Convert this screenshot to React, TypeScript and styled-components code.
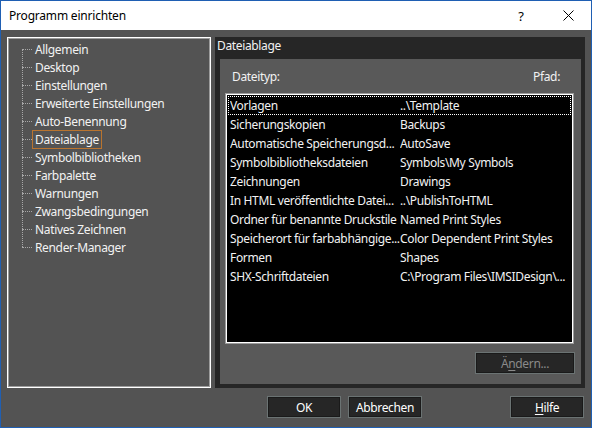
import styled, { createGlobalStyle } from 'styled-components';

const GlobalStyle = createGlobalStyle`
    html, body {
        margin: 0;
        padding: 0;
        background: #535353;
    }
    * {
        box-sizing: border-box;
    }
`;

const Window = styled.div`
    width: 592px;
    height: 428px;
    border: 1px solid #1f5fb3;
    background: #535353;
    display: flex;
    flex-direction: column;
    font-family: 'Noto Sans', 'Open Sans', sans-serif;
    font-size: 12px;
    letter-spacing: -0.35px;
    color: #f2f2f2;
`;

const TitleBar = styled.div`
    height: 29px;
    background: #ffffff;
    color: #000000;
    display: flex;
    align-items: center;
    padding-left: 8px;
    letter-spacing: -0.2px;
    .title {
        flex: 1;
    }
    .help {
        width: 20px;
        text-align: center;
        font-size: 13px;
        margin-right: 14px;
    }
    .close {
        width: 46px;
        height: 29px;
        display: flex;
        align-items: center;
        justify-content: center;
    }
`;

const Body = styled.div`
    flex: 1;
    padding: 7px 6px 0 6px;
    display: flex;
    flex-direction: column;
`;

const Panels = styled.div`
    display: flex;
    gap: 4px;
    height: 351px;
`;

const TreePanel = styled.div`
    flex: 0 0 204px;
    border: 1px solid #ffffff;
    box-shadow: 0 0 0 1px #9c9c9c inset;
    padding: 2px 0 0 1px;
`;

const Tree = styled.ul`
    position: relative;
    list-style: none;
    margin: 0;
    padding: 0 0 0 13px;
    &::before {
        content: '';
        position: absolute;
        left: 13px;
        top: 9px;
        bottom: 9px;
        border-left: 1px dotted #a8a8a8;
    }
`;

const TreeItem = styled.li<{ $selected?: boolean }>`
    height: 18px;
    display: flex;
    align-items: center;
    .stub {
        width: 10px;
        border-top: 1px dotted #a8a8a8;
    }
    .label {
        line-height: 17px;
        padding: 0 2px;
        border: 1px solid ${(p) => (p.$selected ? '#b9742f' : 'transparent')};
        white-space: nowrap;
    }
`;

const Frame = styled.div`
    flex: 1;
    min-width: 0;
    background: #262626;
    display: flex;
    flex-direction: column;
`;

const FrameTitle = styled.div`
    height: 22px;
    line-height: 17px;
    padding-left: 2px;
`;

const Group = styled.div`
    flex: 1;
    margin: 0 4px 4px 5px;
    background: #595959;
    display: flex;
    flex-direction: column;
    padding: 0 8px 0 6px;
`;

const ColumnHeads = styled.div`
    height: 35px;
    display: flex;
    justify-content: space-between;
    align-items: center;
    padding: 0 13px 0 6px;
`;

const List = styled.div`
    height: 249px;
    background: #000000;
    border: 1px solid #ffffff;
    box-shadow: 0 0 0 1px #9c9c9c;
    padding: 1px;
`;

const Row = styled.div<{ $focused?: boolean }>`
    height: 19px;
    display: grid;
    grid-template-columns: 170px 1fr;
    align-items: center;
    padding-left: 2px;
    white-space: nowrap;
    outline: ${(p) => (p.$focused ? '1px dotted #ffffff' : 'none')};
    outline-offset: -1px;
    span {
        overflow: hidden;
    }
`;

const Actions = styled.div`
    display: flex;
    justify-content: flex-end;
    padding: 9px 0 0 0;
    margin-right: -2px;
`;

const Button = styled.button<{ $disabled?: boolean; $push?: number }>`
    width: ${(p) => (p.$disabled ? 100 : 74)}px;
    height: 22px;
    margin-left: ${(p) => p.$push ?? 0}px;
    background: #262626;
    border: 1px solid #6b7373;
    box-shadow: inset 0 0 0 1px #1a1a1a;
    color: ${(p) => (p.$disabled ? '#8a8a8a' : '#ffffff')};
    font-family: inherit;
    font-size: 12px;
    letter-spacing: inherit;
    padding: 0;
    u {
        text-decoration-thickness: 1px;
        text-underline-offset: 2px;
    }
`;

const Footer = styled.div`
    display: flex;
    justify-content: flex-end;
    margin: 8px 1px 0 0;
    gap: 7px;
`;

const treeItems = [
    'Allgemein',
    'Desktop',
    'Einstellungen',
    'Erweiterte Einstellungen',
    'Auto-Benennung',
    'Dateiablage',
    'Symbolbibliotheken',
    'Farbpalette',
    'Warnungen',
    'Zwangsbedingungen',
    'Natives Zeichnen',
    'Render-Manager',
];

const rows = [
    ['Vorlagen', '..\\Template'],
    ['Sicherungskopien', 'Backups'],
    ['Automatische Speicherungsd...', 'AutoSave'],
    ['Symbolbibliotheksdateien', 'Symbols\\My Symbols'],
    ['Zeichnungen', 'Drawings'],
    ['In HTML veröffentlichte Datei...', '..\\PublishToHTML'],
    ['Ordner für benannte Druckstile', 'Named Print Styles'],
    ['Speicherort für farbabhängige...', 'Color Dependent Print Styles'],
    ['Formen', 'Shapes'],
    ['SHX-Schriftdateien', 'C:\\Program Files\\IMSIDesign\\...'],
];

function App() {
    return (
        <>
            <GlobalStyle />
            <Window>
                <TitleBar>
                    <span className="title">Programm einrichten</span>
                    <span className="help">?</span>
                    <span className="close">
                        <svg width="11" height="11" viewBox="0 0 11 11">
                            <path d="M0.5 0.5 L10.5 10.5 M10.5 0.5 L0.5 10.5" stroke="#000" strokeWidth="1" />
                        </svg>
                    </span>
                </TitleBar>
                <Body>
                    <Panels>
                        <TreePanel>
                            <Tree>
                                {treeItems.map((item) => (
                                    <TreeItem key={item} $selected={item === 'Dateiablage'}>
                                        <span className="stub" />
                                        <span className="label">{item}</span>
                                    </TreeItem>
                                ))}
                            </Tree>
                        </TreePanel>
                        <Frame>
                            <FrameTitle>Dateiablage</FrameTitle>
                            <Group>
                                <ColumnHeads>
                                    <span>Dateityp:</span>
                                    <span>Pfad:</span>
                                </ColumnHeads>
                                <List>
                                    {rows.map(([type, path], i) => (
                                        <Row key={type} $focused={i === 0}>
                                            <span>{type}</span>
                                            <span>{path}</span>
                                        </Row>
                                    ))}
                                </List>
                                <Actions>
                                    <Button $disabled>
                                        Ä<u>n</u>dern...
                                    </Button>
                                </Actions>
                            </Group>
                        </Frame>
                    </Panels>
                    <Footer>
                        <Button>OK</Button>
                        <Button>Abbrechen</Button>
                        <Button $push={81}>
                            <u>H</u>ilfe
                        </Button>
                    </Footer>
                </Body>
            </Window>
        </>
    );
}
export default App;
